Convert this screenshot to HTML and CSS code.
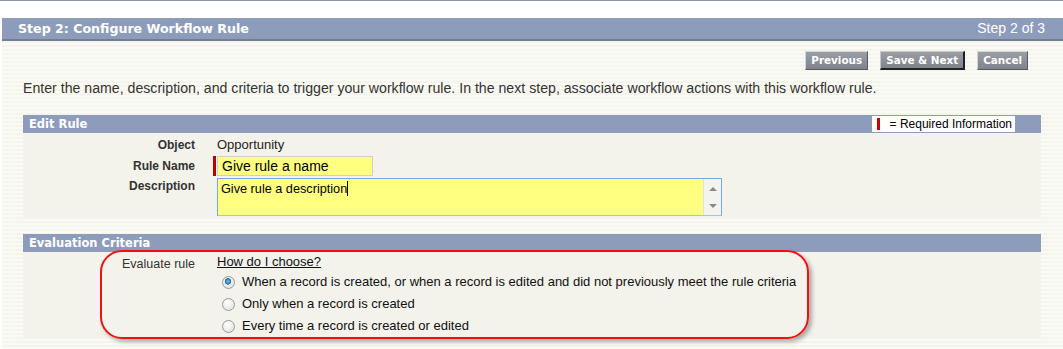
FILE: index.html
```html
<!DOCTYPE html>
<html lang="en">
<head>
  <meta charset="UTF-8">
  <title>Step 2: Configure Workflow Rule</title>
  <link rel="stylesheet" href="styles.css">
</head>
<body>
  <div class="topline"></div>

  <div class="wizard">
    <div class="wizard-head">
      <h2>Step 2: Configure Workflow Rule</h2>
      <span class="step-count">Step 2 of 3</span>
    </div>

    <div class="wizard-body">
      <div class="btn-row">
        <button class="btn">Previous</button>
        <button class="btn btn-focus">Save &amp; Next</button>
        <button class="btn">Cancel</button>
      </div>

      <p class="intro">Enter the name, description, and criteria to trigger your workflow rule. In the next step, associate workflow actions with this workflow rule.</p>

      <div class="section">
        <div class="section-head">
          <h3>Edit Rule</h3>
          <span class="req-legend"><span class="req-bar"></span>= Required Information</span>
        </div>
        <div class="section-body edit-body">
          <div class="row">
            <label class="lbl">Object</label>
            <div class="val">Opportunity</div>
          </div>
          <div class="row row-input">
            <label class="lbl">Rule Name</label>
            <div class="val">
              <span class="req-mark"></span>
              <div class="text-input">Give rule a name</div>
            </div>
          </div>
          <div class="row row-area">
            <label class="lbl">Description</label>
            <div class="val">
              <div class="text-area">
                <div class="area-text">Give rule a description<span class="caret"></span></div>
                <div class="scrollbar">
                  <span class="arrow up"></span>
                  <span class="arrow down"></span>
                </div>
              </div>
            </div>
          </div>
        </div>
      </div>

      <div class="section eval">
        <div class="section-head">
          <h3>Evaluation Criteria</h3>
        </div>
        <div class="section-body eval-body">
          <div class="row">
            <label class="lbl lbl-plain">Evaluate rule</label>
            <div class="val choices">
              <a class="help-link" href="#">How do I choose?</a>
              <label class="radio"><input type="radio" name="ev" checked> When a record is created, or when a record is edited and did not previously meet the rule criteria</label>
              <label class="radio"><input type="radio" name="ev"> Only when a record is created</label>
              <label class="radio"><input type="radio" name="ev"> Every time a record is created or edited</label>
            </div>
          </div>
          <div class="callout"></div>
        </div>
      </div>
    </div>
  </div>
</body>
</html>
```

FILE: styles.css
```css
* {
  box-sizing: border-box;
}

body {
  margin: 0;
  font-family: "Liberation Sans", Arial, sans-serif;
  color: #222;
  background: #fff;
  overflow: hidden;
}

.topline {
  height: 1px;
  background: #8c93a6;
  margin-bottom: 17px;
}

.wizard {
  margin-left: 2px;
}

.wizard-head {
  height: 23px;
  display: flex;
  align-items: center;
  justify-content: space-between;
  padding: 0 18px 1px 16px;
  background: #8e9cbc;
  border-bottom: 2px solid #737d93;
  color: #fff;
}

.wizard-head h2 {
  margin: 0;
  font-family: "DejaVu Sans", Verdana, sans-serif;
  font-size: 12.6px;
  font-weight: bold;
}

.step-count {
  font-size: 14px;
}

.wizard-body {
  padding: 10px 22px 12px 21px;
  background: repeating-linear-gradient(#f4f4ec 0 2px, #fbfbf6 2px 4px);
  height: 308px;
}

.btn-row {
  display: flex;
  justify-content: flex-end;
  gap: 12px;
  padding-right: 13px;
}

.btn {
  height: 19px;
  padding: 0 5px 1px;
  font-family: "DejaVu Sans", Verdana, sans-serif;
  font-size: 10.4px;
  font-weight: bold;
  color: #fff;
  background: linear-gradient(#9a9ea6, #7f838b);
  border: 1px solid;
  border-color: #d6d6d6 #5a5a5a #5a5a5a #d6d6d6;
}

.btn-focus {
  border-color: #c8c8c8 #222 #222 #c8c8c8;
  border-width: 1px 2px 2px 1px;
}

.intro {
  margin: 10px 0 0 0;
  font-size: 14.15px;
  line-height: 16px;
  color: #333;
}

.section {
  margin-top: 19px;
}

.section-head {
  height: 18px;
  display: flex;
  align-items: center;
  justify-content: space-between;
  padding: 0 26px 0 6px;
  background: #8e9cbc;
  color: #fff;
}

.section-head h3 {
  margin: 0;
  font-family: "DejaVu Sans", Verdana, sans-serif;
  font-size: 11.5px;
  font-weight: bold;
}

.req-legend {
  display: flex;
  align-items: center;
  height: 16px;
  padding: 0 3px 0 5px;
  background: #fff;
  color: #000;
  font-size: 12px;
}

.req-bar {
  width: 3px;
  height: 12px;
  margin-right: 10px;
  background: #c00;
}

.section-body {
  background: #f3f2eb;
}

.edit-body {
  padding: 4px 0 1px;
}

.row {
  display: flex;
  align-items: flex-start;
}

.lbl {
  width: 172px;
  text-align: right;
  font-size: 12px;
  font-weight: bold;
  color: #333;
  line-height: 16px;
}

.lbl-plain {
  font-weight: normal;
  font-size: 12.5px;
}

.val {
  margin-left: 22px;
  font-size: 13px;
  line-height: 16px;
  display: flex;
}

.row-input {
  margin-top: 3px;
}

.row-input .lbl {
  margin-top: 2px;
}

.row-input .val {
  margin-left: 18px;
}

.req-mark {
  width: 3px;
  height: 20px;
  margin-right: 1px;
  background: #b00;
}

.text-input {
  width: 156px;
  height: 20px;
  padding: 1px 4px;
  font-size: 14px;
  line-height: 17px;
  color: #000;
  background: #ffff80;
  border: 1px solid #cfcfcf;
}

.row-area {
  margin-top: 2px;
}

.text-area {
  display: flex;
  width: 505px;
  height: 38px;
  background: #ffff80;
  border: 1px solid #7aa7d6;
  border-bottom-color: #a9c3df;
}

.area-text {
  flex: 1;
  padding: 2px 3px;
  font-size: 12.7px;
  line-height: 16px;
  color: #000;
}

.caret {
  display: inline-block;
  width: 1px;
  height: 15px;
  background: #000;
  vertical-align: -3px;
}

.scrollbar {
  width: 18px;
  display: flex;
  flex-direction: column;
  justify-content: space-between;
  align-items: center;
  padding: 8px 0 7px;
  background: #f3f3f0;
  border-left: 1px solid #e0e0dc;
}

.arrow {
  width: 0;
  height: 0;
  border-left: 4px solid transparent;
  border-right: 4px solid transparent;
}

.arrow.up {
  border-bottom: 4px solid #8a8a8a;
}

.arrow.down {
  border-top: 4px solid #8a8a8a;
}

.eval {
  margin-top: 17px;
}

.eval-body {
  position: relative;
  padding: 1px 0 7px;
  height: 86px;
}

.eval .lbl {
  margin-top: 3px;
}

.choices {
  flex-direction: column;
}

.help-link {
  color: #111;
  font-size: 13px;
  line-height: 18px;
}

.radio {
  display: flex;
  align-items: center;
  height: 22px;
  font-size: 13px;
  color: #111;
}

.radio input {
  appearance: none;
  width: 13px;
  height: 13px;
  margin: 0 7px 0 5px;
  border-radius: 50%;
  border: 1px solid #9a9a9a;
  background: radial-gradient(circle at 40% 35%, #fff, #dcdcdc);
}

.radio input:checked {
  background:
    radial-gradient(circle at 45% 40%, #7fc4f0 0, #1d6ea8 3px, transparent 3.5px),
    radial-gradient(circle at 40% 35%, #fff, #dcdcdc);
}

.callout {
  position: absolute;
  left: 77px;
  top: -2px;
  width: 709px;
  height: 89px;
  border: 2px solid #f01010;
  border-radius: 22px;
  box-shadow: 3px 3px 4px rgba(0, 0, 0, 0.3);
  pointer-events: none;
}
```
